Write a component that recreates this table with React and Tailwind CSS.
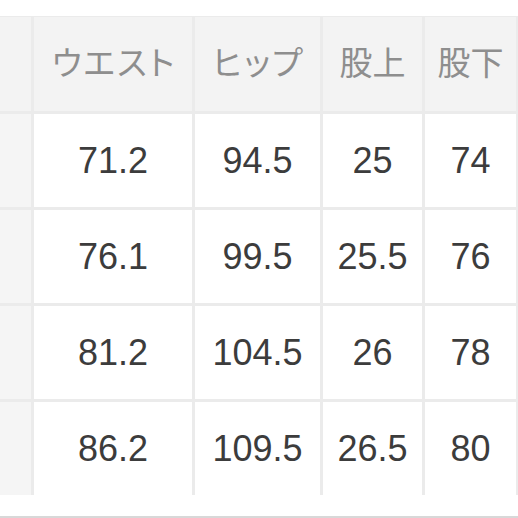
import React from "react"

const headers = ["", "ウエスト", "ヒップ", "股上", "股下"]

const rows = [
  ["71.2", "94.5", "25", "74"],
  ["76.1", "99.5", "25.5", "76"],
  ["81.2", "104.5", "26", "78"],
  ["86.2", "109.5", "26.5", "80"],
]

const font = { fontFamily: '"Liberation Sans", "Noto Sans CJK JP", sans-serif' }

export default function App() {
  return (
    <div className="w-[518px] h-[518px] bg-white overflow-hidden" style={font}>
      <div className="pt-[16px]">
        <div className="grid grid-cols-[31px_158px_125px_99px_91px] gap-[3px] bg-[#ebebeb] pt-[1px] pr-[2px] w-[518px]">
          {headers.map((h, i) => (
            <div
              key={i}
              className={
                "h-[94px] bg-[#f3f3f3] flex items-center justify-center text-[33px] text-[#8e8e8e] [font-feature-settings:'palt'] whitespace-nowrap " +
                (i === 1 || i === 2 ? "tracking-[2px] pl-[2px]" : "")
              }
            >
              {h}
            </div>
          ))}
          {rows.map((r, ri) => (
            <React.Fragment key={ri}>
              <div className="h-[93px] bg-[#f5f5f5]" />
              {r.map((v, ci) => (
                <div
                  key={ci}
                  className="h-[93px] bg-white flex items-center justify-center text-[36px] text-[#3c3c3c]"
                >
                  {v}
                </div>
              ))}
            </React.Fragment>
          ))}
        </div>
        <div className="h-[21px]" />
        <div className="h-[2px] bg-[#d8d8d8]" />
      </div>
    </div>
  )
}
